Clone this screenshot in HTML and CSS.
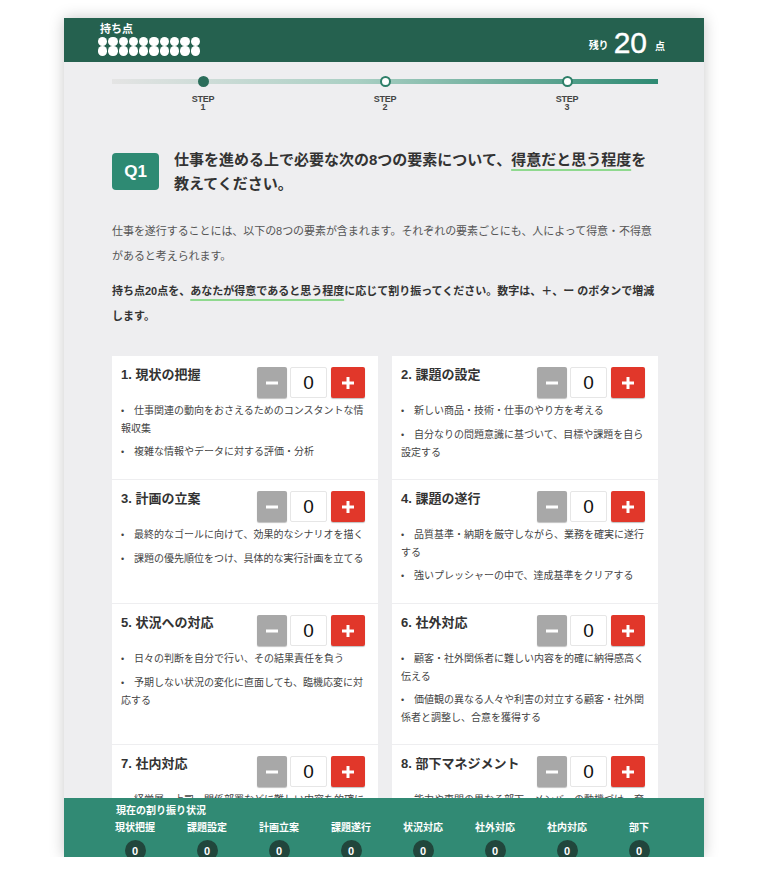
FILE: index.html
```html
<!DOCTYPE html>
<html lang="ja">
<head>
<meta charset="utf-8">
<title>Q1</title>
<link rel="stylesheet" href="styles.css">
</head>
<body>
<div class="frame">
  <header class="top">
    <div class="points">
      <div class="points-label">持ち点</div>
      <div class="dots">
        <span class="dot"></span><span class="dot"></span><span class="dot"></span><span class="dot"></span><span class="dot"></span><span class="dot"></span><span class="dot"></span><span class="dot"></span><span class="dot"></span><span class="dot"></span>
        <span class="dot"></span><span class="dot"></span><span class="dot"></span><span class="dot"></span><span class="dot"></span><span class="dot"></span><span class="dot"></span><span class="dot"></span><span class="dot"></span><span class="dot"></span>
      </div>
    </div>
    <div class="remain"><span class="remain-label">残り</span><span class="remain-num">20</span><span class="remain-unit">点</span></div>
  </header>

  <main class="body">
    <div class="steps">
      <div class="step active"><span class="step-dot"></span><span class="step-label">STEP<br>1</span></div>
      <div class="step"><span class="step-dot"></span><span class="step-label">STEP<br>2</span></div>
      <div class="step"><span class="step-dot"></span><span class="step-label">STEP<br>3</span></div>
    </div>

    <div class="question">
      <div class="q-badge">Q1</div>
      <h1 class="q-text">仕事を進める上で必要な次の8つの要素について、<span class="mark">得意だと思う程度</span>を教えてください。</h1>
    </div>

    <p class="lead">仕事を遂行することには、以下の8つの要素が含まれます。それぞれの要素ごとにも、人によって得意・不得意があると考えられます。</p>
    <p class="lead strong">持ち点20点を、<span class="mark">あなたが得意であると思う程度</span>に応じて割り振ってください。数字は、＋、ー のボタンで増減します。</p>

    <div class="cards">
      <section class="card">
        <div class="card-head">
          <h2 class="card-title">1. 現状の把握</h2>
          <div class="stepper">
            <button class="btn minus" type="button"><svg width="12" height="12" viewBox="0 0 12 12"><rect x="0" y="4.5" width="12" height="3" fill="#fff"/></svg></button>
            <span class="count">0</span>
            <button class="btn plus" type="button"><svg width="12" height="12" viewBox="0 0 12 12"><rect x="0" y="4.5" width="12" height="3" fill="#fff"/><rect x="4.5" y="0" width="3" height="12" fill="#fff"/></svg></button>
          </div>
        </div>
        <ul class="items">
          <li>仕事関連の動向をおさえるためのコンスタントな情報収集</li>
          <li>複雑な情報やデータに対する評価・分析</li>
        </ul>
      </section>

      <section class="card">
        <div class="card-head">
          <h2 class="card-title">2. 課題の設定</h2>
          <div class="stepper">
            <button class="btn minus" type="button"><svg width="12" height="12" viewBox="0 0 12 12"><rect x="0" y="4.5" width="12" height="3" fill="#fff"/></svg></button>
            <span class="count">0</span>
            <button class="btn plus" type="button"><svg width="12" height="12" viewBox="0 0 12 12"><rect x="0" y="4.5" width="12" height="3" fill="#fff"/><rect x="4.5" y="0" width="3" height="12" fill="#fff"/></svg></button>
          </div>
        </div>
        <ul class="items">
          <li>新しい商品・技術・仕事のやり方を考える</li>
          <li>自分なりの問題意識に基づいて、目標や課題を自ら設定する</li>
        </ul>
      </section>

      <section class="card">
        <div class="card-head">
          <h2 class="card-title">3. 計画の立案</h2>
          <div class="stepper">
            <button class="btn minus" type="button"><svg width="12" height="12" viewBox="0 0 12 12"><rect x="0" y="4.5" width="12" height="3" fill="#fff"/></svg></button>
            <span class="count">0</span>
            <button class="btn plus" type="button"><svg width="12" height="12" viewBox="0 0 12 12"><rect x="0" y="4.5" width="12" height="3" fill="#fff"/><rect x="4.5" y="0" width="3" height="12" fill="#fff"/></svg></button>
          </div>
        </div>
        <ul class="items">
          <li>最終的なゴールに向けて、効果的なシナリオを描く</li>
          <li>課題の優先順位をつけ、具体的な実行計画を立てる</li>
        </ul>
      </section>

      <section class="card">
        <div class="card-head">
          <h2 class="card-title">4. 課題の遂行</h2>
          <div class="stepper">
            <button class="btn minus" type="button"><svg width="12" height="12" viewBox="0 0 12 12"><rect x="0" y="4.5" width="12" height="3" fill="#fff"/></svg></button>
            <span class="count">0</span>
            <button class="btn plus" type="button"><svg width="12" height="12" viewBox="0 0 12 12"><rect x="0" y="4.5" width="12" height="3" fill="#fff"/><rect x="4.5" y="0" width="3" height="12" fill="#fff"/></svg></button>
          </div>
        </div>
        <ul class="items">
          <li>品質基準・納期を厳守しながら、業務を確実に遂行する</li>
          <li>強いプレッシャーの中で、達成基準をクリアする</li>
        </ul>
      </section>

      <section class="card">
        <div class="card-head">
          <h2 class="card-title">5. 状況への対応</h2>
          <div class="stepper">
            <button class="btn minus" type="button"><svg width="12" height="12" viewBox="0 0 12 12"><rect x="0" y="4.5" width="12" height="3" fill="#fff"/></svg></button>
            <span class="count">0</span>
            <button class="btn plus" type="button"><svg width="12" height="12" viewBox="0 0 12 12"><rect x="0" y="4.5" width="12" height="3" fill="#fff"/><rect x="4.5" y="0" width="3" height="12" fill="#fff"/></svg></button>
          </div>
        </div>
        <ul class="items">
          <li>日々の判断を自分で行い、その結果責任を負う</li>
          <li>予期しない状況の変化に直面しても、臨機応変に対応する</li>
        </ul>
      </section>

      <section class="card">
        <div class="card-head">
          <h2 class="card-title">6. 社外対応</h2>
          <div class="stepper">
            <button class="btn minus" type="button"><svg width="12" height="12" viewBox="0 0 12 12"><rect x="0" y="4.5" width="12" height="3" fill="#fff"/></svg></button>
            <span class="count">0</span>
            <button class="btn plus" type="button"><svg width="12" height="12" viewBox="0 0 12 12"><rect x="0" y="4.5" width="12" height="3" fill="#fff"/><rect x="4.5" y="0" width="3" height="12" fill="#fff"/></svg></button>
          </div>
        </div>
        <ul class="items">
          <li>顧客・社外関係者に難しい内容を的確に納得感高く伝える</li>
          <li>価値観の異なる人々や利害の対立する顧客・社外関係者と調整し、合意を獲得する</li>
        </ul>
      </section>

      <section class="card">
        <div class="card-head">
          <h2 class="card-title">7. 社内対応</h2>
          <div class="stepper">
            <button class="btn minus" type="button"><svg width="12" height="12" viewBox="0 0 12 12"><rect x="0" y="4.5" width="12" height="3" fill="#fff"/></svg></button>
            <span class="count">0</span>
            <button class="btn plus" type="button"><svg width="12" height="12" viewBox="0 0 12 12"><rect x="0" y="4.5" width="12" height="3" fill="#fff"/><rect x="4.5" y="0" width="3" height="12" fill="#fff"/></svg></button>
          </div>
        </div>
        <ul class="items">
          <li>経営層・上司・関係部署などに難しい内容を的確に納得感高く伝える</li>
          <li>立場の異なる社内関係者と調整し、協力を得る</li>
        </ul>
      </section>

      <section class="card">
        <div class="card-head">
          <h2 class="card-title">8. 部下マネジメント</h2>
          <div class="stepper">
            <button class="btn minus" type="button"><svg width="12" height="12" viewBox="0 0 12 12"><rect x="0" y="4.5" width="12" height="3" fill="#fff"/></svg></button>
            <span class="count">0</span>
            <button class="btn plus" type="button"><svg width="12" height="12" viewBox="0 0 12 12"><rect x="0" y="4.5" width="12" height="3" fill="#fff"/><rect x="4.5" y="0" width="3" height="12" fill="#fff"/></svg></button>
          </div>
        </div>
        <ul class="items">
          <li>能力や専門の異なる部下・メンバーの動機づけ・育成を行う</li>
          <li>チームの目標を示し、メンバーをまとめる</li>
        </ul>
      </section>
    </div>
  </main>

  <footer class="summary">
    <div class="summary-title">現在の割り振り状況</div>
    <div class="summary-grid">
      <div class="summary-col"><span class="summary-label">現状把握</span><span class="summary-val">0</span></div>
      <div class="summary-col"><span class="summary-label">課題設定</span><span class="summary-val">0</span></div>
      <div class="summary-col"><span class="summary-label">計画立案</span><span class="summary-val">0</span></div>
      <div class="summary-col"><span class="summary-label">課題遂行</span><span class="summary-val">0</span></div>
      <div class="summary-col"><span class="summary-label">状況対応</span><span class="summary-val">0</span></div>
      <div class="summary-col"><span class="summary-label">社外対応</span><span class="summary-val">0</span></div>
      <div class="summary-col"><span class="summary-label">社内対応</span><span class="summary-val">0</span></div>
      <div class="summary-col"><span class="summary-label">部下</span><span class="summary-val">0</span></div>
    </div>
  </footer>
</div>
</body>
</html>
```

FILE: styles.css
```css
* { box-sizing: border-box; }

html, body {
  margin: 0;
  padding: 0;
  background: #ffffff;
}

body {
  font-family: "Liberation Sans", "Noto Sans CJK JP", sans-serif;
  color: #333;
}

.frame {
  width: 640px;
  height: 839px;
  margin: 18px auto 0;
  display: flex;
  flex-direction: column;
  overflow: hidden;
  background: #eeeef0;
  box-shadow: 0 0 14px rgba(0, 0, 0, 0.22);
}

/* header */
.top {
  flex: 0 0 44px;
  height: 44px;
  background: #25614f;
  color: #fff;
  display: flex;
  justify-content: space-between;
  align-items: flex-start;
  padding: 4px 39px 0 34px;
}

.points-label {
  font-size: 11px;
  font-weight: bold;
  line-height: 14px;
  padding-left: 2px;
}

.dots {
  display: grid;
  grid-template-columns: repeat(10, 9.3px);
  column-gap: 1px;
  row-gap: 0;
  margin-top: 1px;
}

.dot {
  width: 9.3px;
  height: 9.3px;
  border-radius: 50%;
  background: #fff;
}

.remain {
  display: flex;
  align-items: baseline;
  margin-top: 6px;
}

.remain-label {
  font-size: 10px;
  font-weight: bold;
  margin-right: 5px;
  position: relative;
  top: -4px;
}

.remain-num {
  font-size: 30px;
  line-height: 30px;
  margin-right: 8px;
  -webkit-text-stroke: 0.4px #fff;
}

.remain-unit {
  font-size: 10px;
  font-weight: bold;
  position: relative;
  top: -3px;
}

/* main */
.body {
  flex: 1 1 auto;
  overflow: hidden;
  padding: 0 46px 0 48px;
}

.steps {
  display: grid;
  grid-template-columns: repeat(3, 1fr);
  padding-top: 14px;
  background-image: linear-gradient(90deg, #e4e4e4 0%, #a9cfc3 45%, #2e8a73 100%);
  background-repeat: no-repeat;
  background-size: 100% 5px;
  background-position: 0 17px;
}

.step {
  display: flex;
  flex-direction: column;
  align-items: center;
}

.step-dot {
  width: 11px;
  height: 11px;
  border-radius: 50%;
  background: #fff;
  border: 2px solid #2e7f69;
}

.step.active .step-dot {
  background: #2b6e5b;
  border-color: #2b6e5b;
}

.step-label {
  margin-top: 8px;
  font-size: 9px;
  font-weight: bold;
  line-height: 8px;
  color: #444;
  text-align: center;
  letter-spacing: -0.2px;
}

.question {
  display: flex;
  align-items: flex-start;
  gap: 15px;
  margin-top: 37px;
}

.q-badge {
  flex: 0 0 47px;
  height: 37px;
  margin-top: 5px;
  border-radius: 4px;
  background: #2e8a73;
  color: #fff;
  font-size: 17px;
  font-weight: bold;
  display: flex;
  align-items: center;
  justify-content: center;
}

.q-text {
  flex: 1;
  margin: 0;
  font-size: 15px;
  font-weight: bold;
  line-height: 24px;
  color: #333;
}

.mark {
  text-decoration: underline;
  text-decoration-color: #8fd98f;
  text-decoration-thickness: 2px;
  text-underline-offset: 4px;
}

.lead {
  margin: 23px 0 0;
  font-size: 11px;
  line-height: 25px;
  color: #555;
  letter-spacing: -0.06px;
}

.lead.strong {
  margin-top: 10px;
  font-weight: bold;
  color: #333;
  letter-spacing: 0;
}

/* cards */
.cards {
  display: grid;
  grid-template-columns: 1fr 1fr;
  column-gap: 14px;
  row-gap: 1px;
  margin-top: 27px;
}

.card {
  background: #fff;
  padding: 11px 13px 18px 9px;
}

.card-head {
  display: flex;
  justify-content: space-between;
  align-items: flex-start;
}

.card-title {
  margin: 0;
  font-size: 13px;
  font-weight: bold;
  line-height: 16px;
  color: #333;
}

.stepper {
  display: flex;
  align-items: stretch;
  height: 31px;
}

.btn {
  border: 0;
  padding: 0;
  margin: 0;
  height: 31px;
  border-radius: 2px;
  display: flex;
  align-items: center;
  justify-content: center;
  box-shadow: 0 1px 1px rgba(0, 0, 0, 0.25);
}

.btn.minus {
  width: 30px;
  background: #a8a8a8;
}

.btn.plus {
  width: 34px;
  background: #e1372a;
}

.count {
  width: 37px;
  margin: 0 4px 0 3px;
  background: #fff;
  border: 1px solid #e6e6e6;
  border-radius: 2px;
  display: flex;
  align-items: center;
  justify-content: center;
  font-size: 19px;
  color: #111;
}

.items {
  list-style: none;
  margin: 4px 0 0;
  padding: 0;
}

.items li {
  font-size: 10px;
  line-height: 17px;
  color: #444;
}

.items li + li {
  margin-top: 6px;
}

.items li::before {
  content: "•";
  display: inline-block;
  width: 13px;
  font-size: 9px;
}

/* footer */
.summary {
  flex: 0 0 59px;
  height: 59px;
  overflow: hidden;
  background: #318a74;
  color: #fff;
  padding: 6px 0 0 35px;
}

.summary-title {
  font-size: 10px;
  font-weight: bold;
  line-height: 14px;
  margin-left: 17px;
}

.summary-grid {
  display: grid;
  grid-template-columns: repeat(8, 72px);
  margin-top: 3px;
}

.summary-col {
  display: flex;
  flex-direction: column;
  align-items: center;
}

.summary-label {
  font-size: 10px;
  font-weight: bold;
  line-height: 14px;
}

.summary-val {
  width: 21px;
  height: 21px;
  margin-top: 5px;
  border-radius: 50%;
  background: #21463c;
  display: flex;
  align-items: center;
  justify-content: center;
  font-size: 11px;
  font-weight: bold;
}
```
